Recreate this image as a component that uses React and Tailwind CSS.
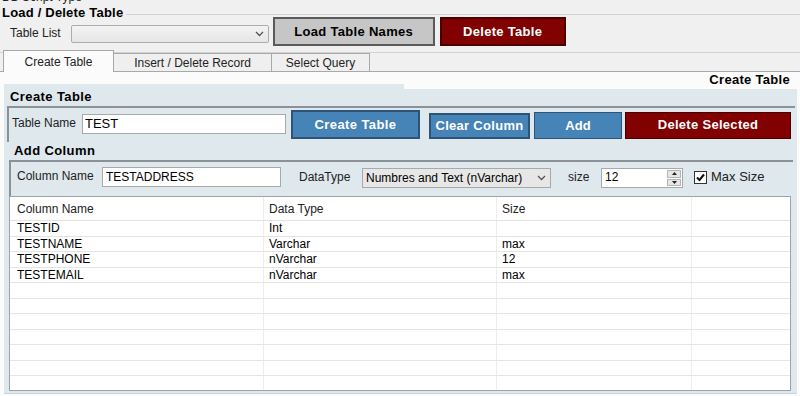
import React from 'react';

const rows = [
  ['TESTID', 'Int', ''],
  ['TESTNAME', 'Varchar', 'max'],
  ['TESTPHONE', 'nVarchar', '12'],
  ['TESTEMAIL', 'nVarchar', 'max'],
];

function Chevron() {
  return (
    <svg width="9" height="6" viewBox="0 0 9 6" className="shrink-0">
      <path d="M1 1 L4.5 4.5 L8 1" fill="none" stroke="#555" strokeWidth="1.3" />
    </svg>
  );
}

function Frame({ children, className }) {
  return (
    <div className={`border-t-2 border-l-2 border-t-[#8b9196] border-l-[#8b9196] flex items-start ${className}`}>
      {children}
    </div>
  );
}

export default function App() {
  const gridRows = [...rows];
  while (gridRows.length < 11) gridRows.push(['', '', '']);

  return (
    <div className="w-[800px] h-[396px] overflow-hidden bg-[#f0f0f0] text-[12px] text-black font-['Liberation_Sans',Arial,sans-serif]">
      {/* cut off label from the section above */}
      <div className="h-[5px] overflow-hidden">
        <div className="-mt-[10px] ml-[2px] leading-[14px] text-[#222]">DB Script Type</div>
      </div>

      {/* Load / Delete Table */}
      <div className="h-[12px] flex items-start">
        <span className="ml-[2px] font-bold text-[13px] leading-[15px] tracking-[0.2px] relative z-10">Load / Delete Table</span>
        <div className="flex-1 mt-[9px] ml-[3px] border-t border-[#d4d4d4]" />
      </div>
      <div className="h-[29px] flex items-start">
        <span className="ml-[10px] mt-[9px] leading-[14px] text-[#222]">Table List</span>
        <div className="ml-[10px] mt-[8px] w-[198px] h-[18px] border border-[#acacac] rounded-[2px] bg-gradient-to-b from-[#f3f3f3] to-[#e6e6e6] flex items-center justify-end pr-[4px]">
          <Chevron />
        </div>
        <button className="ml-[4px] w-[162px] h-[29px] bg-[#c6c6c6] border-2 border-[#5a5a5a] font-bold text-[13px] tracking-[0.3px]">
          Load Table Names
        </button>
        <button className="ml-[5px] w-[126px] h-[29px] bg-[#810000] border-2 border-[#4a0000] text-white font-bold text-[13px] tracking-[0.3px]">
          Delete Table
        </button>
      </div>

      {/* tabs */}
      <div className="h-[6px]" />
      <div className="h-[20px] border-t border-[#d2d2d2] flex items-stretch">
        <div className="w-[3px] border-b border-[#a8a8a8]" />
        <div className="w-[111px] h-[22px] -mt-[3px] bg-[#fbfbfb] border-t border-x border-[#a8a8a8] flex items-center justify-center relative z-10 text-[#222]">
          Create Table
        </div>
        <div className="w-[158px] bg-[#efefef] border-t border-r border-b border-[#a8a8a8] flex items-center justify-center text-[#222]">
          Insert / Delete Record
        </div>
        <div className="w-[98px] bg-[#efefef] border-t border-r border-b border-[#a8a8a8] flex items-center justify-center text-[#222]">
          Select Query
        </div>
        <div className="flex-1 border-b border-[#a8a8a8]" />
      </div>

      {/* tab page */}
      <div className="bg-[#fbfbfb] h-[324px]">
        <div className="flex justify-end">
          <div className="w-[396px] h-[17px] bg-[#fbfbfb] relative z-10 text-right pr-[10px] font-bold text-[13px] leading-[15px] tracking-[0.3px]">
            Create Table
          </div>
        </div>

        <div className="-mt-[5px] ml-[4px] w-[793px] h-[310px] bg-[#dee8ed] border-b border-[#c9d3d8] pt-[5px]">
          <div className="ml-[6px] h-[15px] font-bold text-[13px] leading-[15px] tracking-[0.4px]">Create Table</div>

          <Frame className="mt-[2px] ml-[3px] mr-[2px] h-[36px]">
            <span className="ml-[3px] mt-[8px] w-[70px] leading-[14px] text-[#222]">Table Name</span>
            <div className="mt-[6px] w-[204px] h-[20px] bg-white border border-[#a9a9a9] pl-[2px] leading-[18px] text-[13px]">TEST</div>
            <button className="ml-[5px] mt-[2px] w-[129px] h-[29px] bg-[#4683b7] border-2 border-[#2d5478] text-white font-bold text-[13px] tracking-[0.4px]">
              Create Table
            </button>
            <button className="ml-[9px] mt-[5px] w-[101px] h-[26px] bg-[#4683b7] border-2 border-[#2d5478] text-white font-bold text-[13px] tracking-[0.3px]">
              Clear Column
            </button>
            <button className="ml-[4px] mt-[4px] w-[88px] h-[27px] bg-[#4683b7] border border-[#2d5478] text-white font-bold text-[13px] flex justify-center pt-[3px]">
              Add
            </button>
            <button className="ml-[3px] mt-[4px] w-[166px] h-[27px] bg-[#810000] border border-[#4a0000] text-white font-bold text-[13px] tracking-[0.3px] flex justify-center pt-[2px]">
              Delete Selected
            </button>
          </Frame>

          <div className="h-[18px] pt-[1px] pl-[10px] font-bold text-[13px] leading-[15px] tracking-[0.4px]">Add Column</div>

          <Frame className="ml-[5px] mr-[4px] h-[36px]">
            <span className="ml-[6px] mt-[7px] w-[85px] leading-[14px] text-[#222]">Column Name</span>
            <div className="mt-[5px] w-[179px] h-[20px] bg-white border border-[#a9a9a9] pl-[3px] leading-[18px]">TESTADDRESS</div>
            <span className="ml-[18px] mt-[8px] w-[63px] leading-[14px] text-[#222]">DataType</span>
            <div className="mt-[6px] w-[189px] h-[20px] bg-[#e7e7e7] border border-[#a9a9a9] flex items-center pl-[3px] pr-[4px] justify-between">
              <span className="leading-[14px]">Numbres and Text (nVarchar)</span>
              <Chevron />
            </div>
            <span className="ml-[17px] mt-[8px] w-[33px] leading-[14px] text-[#222]">size</span>
            <div className="mt-[6px] w-[82px] h-[20px] bg-white border border-[#a9a9a9] flex">
              <span className="flex-1 pl-[3px] leading-[16px]">12</span>
              <div className="w-[14px] my-[1px] mr-[1px] flex flex-col gap-[1px]">
                <div className="flex-1 bg-[#e6e6e6] border border-[#b5b5b5] flex items-center justify-center">
                  <svg width="5" height="3" viewBox="0 0 5 3"><path d="M0 3 L2.5 0 L5 3Z" fill="#222" /></svg>
                </div>
                <div className="flex-1 bg-[#e6e6e6] border border-[#b5b5b5] flex items-center justify-center">
                  <svg width="5" height="3" viewBox="0 0 5 3"><path d="M0 0 L2.5 3 L5 0Z" fill="#222" /></svg>
                </div>
              </div>
            </div>
            <div className="ml-[11px] mt-[9px] w-[13px] h-[13px] bg-white border border-[#333] flex items-center justify-center">
              <svg width="11" height="11" viewBox="0 0 11 11"><path d="M2 5.5 L4.5 8 L9 2.5" fill="none" stroke="#111" strokeWidth="2" /></svg>
            </div>
            <span className="ml-[4px] mt-[8px] leading-[14px] text-[#222] text-[13px]">Max Size</span>
          </Frame>

          {/* column grid */}
          <div className="ml-[5px] w-[782px] h-[195px] bg-white border border-[#9ea4a8] overflow-hidden">
            <div className="grid grid-cols-[254px_233px_195px_1fr] h-[24px] border-b border-[#e2e2e2] text-[#222]">
              <div className="pl-[7px] flex items-center border-r border-[#eeeeee]">Column Name</div>
              <div className="pl-[5px] flex items-center border-r border-[#eeeeee]">Data Type</div>
              <div className="pl-[5px] flex items-center border-r border-[#eeeeee]">Size</div>
              <div />
            </div>
            {gridRows.map((r, i) => (
              <div key={i} className="grid grid-cols-[254px_233px_195px_1fr] h-[15.5px] border-b border-[#e4e4e4] leading-[14.5px]">
                <div className="pl-[7px] border-r border-[#ededed]">{r[0]}</div>
                <div className="pl-[5px] border-r border-[#ededed]">{r[1]}</div>
                <div className="pl-[5px] border-r border-[#ededed]">{r[2]}</div>
                <div />
              </div>
            ))}
          </div>
        </div>
      </div>
    </div>
  );
}
